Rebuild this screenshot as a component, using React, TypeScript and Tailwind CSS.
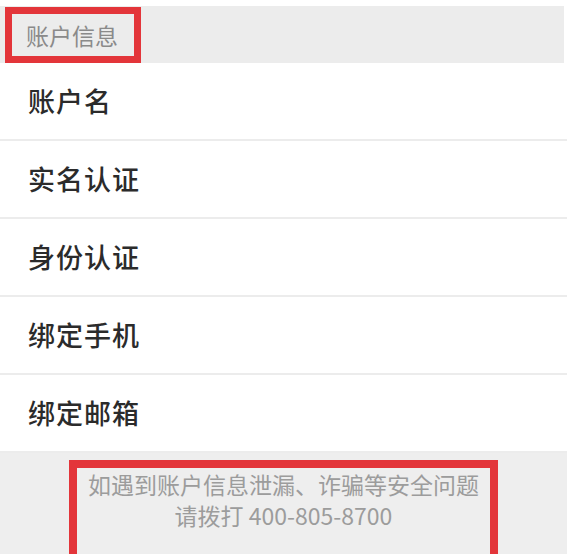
const rows = ["账户名", "实名认证", "身份认证", "绑定手机", "绑定邮箱"];

export default function App() {
  return (
    <div
      className="w-[567px] h-[554px] overflow-hidden bg-[#eeeeee] flex flex-col"
      style={{ fontFamily: '"Noto Sans CJK SC", "Noto Sans", sans-serif' }}
    >
      {/* Section header */}
      <div className="bg-white pt-[6px] pr-[3px]">
        <div className="h-[57px] bg-[#ececec] flex items-start pl-[5px] pt-[1px]">
          <div className="h-[56px] w-[136px] border-[7px] border-[#e3353a] flex items-center pl-[14px] text-[23px] text-[#8a8a8a]">
            账户信息
          </div>
        </div>
      </div>

      {/* Rows */}
      <div className="bg-white">
        {rows.map((label) => (
          <div
            key={label}
            className="h-[78px] border-b-[2px] border-[#ececec] flex items-center pl-[28px] text-[27px] font-medium text-[#2b2b2b] tracking-[1px]"
          >
            {label}
          </div>
        ))}
      </div>

      {/* Footer notice */}
      <div className="flex-1 flex justify-center pt-[7px]">
        <div className="w-[429px] h-[120px] border-[8px] border-[#e3353a] flex flex-col items-center pt-[1px] text-[23px] leading-[31px] text-[#9c9c9c]">
          <p>如遇到账户信息泄漏、诈骗等安全问题</p>
          <p>请拨打 400-805-8700</p>
        </div>
      </div>
    </div>
  );
}
